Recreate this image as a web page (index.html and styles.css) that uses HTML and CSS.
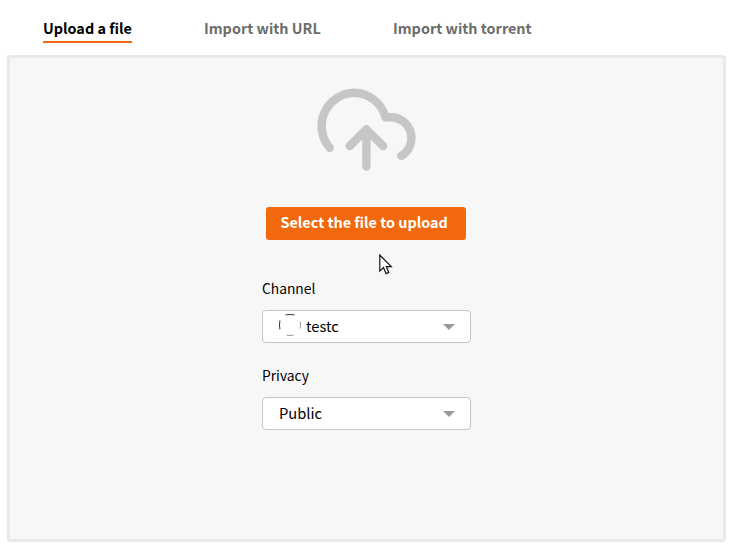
FILE: index.html
```html
<!DOCTYPE html>
<html lang="en">
<head>
<meta charset="utf-8">
<title>Upload a file</title>
<link rel="stylesheet" href="styles.css">
</head>
<body>
<nav class="tabs">
  <a class="tab active">Upload a file</a>
  <a class="tab url">Import with URL</a>
  <a class="tab torrent">Import with torrent</a>
</nav>
<main class="panel">
  <svg class="cloud" width="104" height="88" viewBox="314 86 104 88">
    <path d="M329.7 147.7A33.2 33.2 0 0 1 354 92.8A33 33 0 0 1 385.5 117.3H391A20.7 20.7 0 0 1 401.3 155.8M366.4 166.6V129.5M349.7 146L366.4 129.5L383.1 146"/>
  </svg>
  <button class="upload"><span class="upload-text">Select the file to upload</span></button>
  <form class="fields">
    <label class="label channel-label">Channel</label>
    <div class="select">
      <svg class="avatar" width="22" height="22" viewBox="0 0 22 22">
        <path class="dark" d="M6.5 .9Q11 .1 15.5 .9M.9 6.5Q.1 11 .9 15.5"/>
        <path class="light" d="M21.1 7.5Q21.9 11 21.1 14.5M7.5 21.1Q11 21.9 14.5 21.1"/>
      </svg>
      <span class="value testc">testc</span><i class="caret"></i>
    </div>
    <label class="label privacy-label">Privacy</label>
    <div class="select"><span class="value public">Public</span><i class="caret"></i></div>
  </form>
</main>
<svg class="cursor" width="14" height="22" viewBox="0 0 14 22">
  <path d="M.8 1V17L4.5 13.6L7.1 19.6L9.8 18.4L7.3 12.6H12.3Z"/>
</svg>
</body>
</html>
```
FILE: styles.css
```css
* { box-sizing: border-box; }
body {
  margin: 0;
  height: 546px;
  overflow: hidden;
  background: #fff;
  color: #000;
  font-family: "Noto Sans CJK SC", "Noto Sans", sans-serif;
  font-size: 14px;
}
.tabs {
  display: flex;
  align-items: flex-start;
  height: 55px;
  padding: 17px 0 0 43px;
}
.tab {
  height: 26px;
  font-size: 14.4px;
  line-height: 22px;
  font-weight: 600;
  color: #6c6c6c;
  white-space: nowrap;
}
.active { width: 89px; color: #000; border-bottom: 2px solid #f2690d; }
.url { width: 116px; margin-left: 72px; }
.torrent { margin-left: 73px; }
.panel {
  display: flex;
  flex-direction: column;
  align-items: center;
  width: 719px;
  height: 487px;
  margin-left: 7px;
  border: 3px solid #e9e9e9;
  border-radius: 3px;
  background: #f7f7f7;
}
.cloud { margin: 28px 1px 0 0; }
.cloud path {
  fill: none;
  stroke: #c6c6c6;
  stroke-width: 8.4;
  stroke-linecap: round;
  stroke-linejoin: round;
}
.upload {
  width: 200px;
  height: 33px;
  margin: 33px 1px 0 0;
  padding: 0 0 3px 14.5px;
  border: 0;
  border-radius: 3px;
  background: #f2690d;
  color: #fff;
  font: 600 14.4px/30px "Noto Sans CJK SC", "Noto Sans", sans-serif;
  text-align: left;
}
.fields { width: 209px; margin-top: 37px; }
.label { display: block; height: 33px; line-height: 22px; font-size: 13.8px; }
.select {
  display: flex;
  align-items: center;
  height: 33px;
  margin-bottom: 21px;
  padding: 0 15px 0 16px;
  border: 1px solid #c6c6c6;
  border-radius: 4px;
  background: #fff;
}
.value { line-height: 22px; font-size: 14.7px; margin-top: -2px; }
.avatar { margin: -4px 5px 0 0; }
.avatar path { fill: none; stroke-width: 1; }
.avatar .dark { stroke: #333; }
.avatar .light { stroke: #999; }
.caret {
  margin-left: auto;
  border: 6px solid transparent;
  border-top-color: #999;
  border-bottom: 0;
}
.cursor { position: absolute; left: 379px; top: 254px; }
.cursor path { fill: #fff; stroke: #111; stroke-width: 1.2; }
```
